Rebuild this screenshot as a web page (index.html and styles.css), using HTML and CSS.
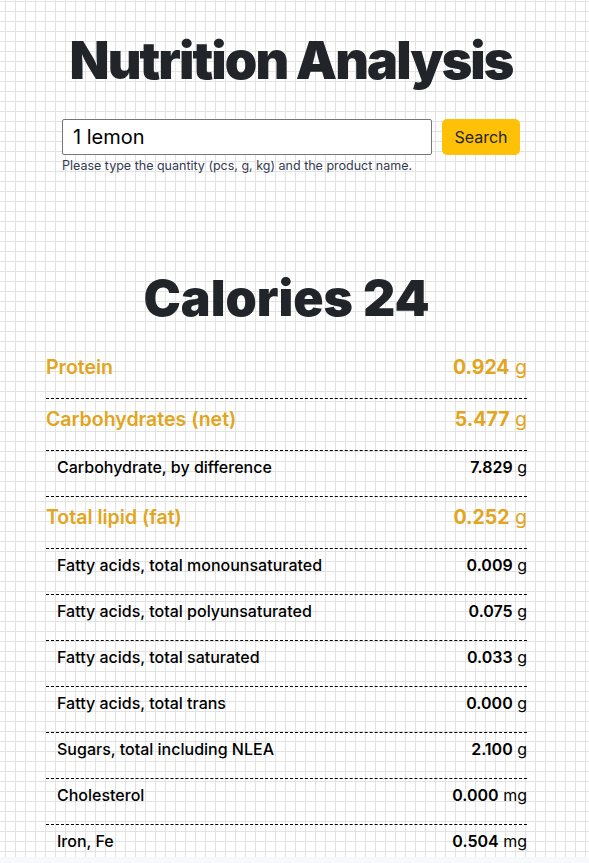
FILE: index.html
```html
<!DOCTYPE html>
<html lang="en">
<head>
<meta charset="utf-8">
<title>Nutrition Analysis</title>
<link rel="stylesheet" href="styles.css">
</head>
<body>
<main class="page">
  <header class="search-area">
    <h1 class="title">Nutrition Analysis</h1>
    <form class="search-form">
      <div class="search-row">
        <input class="search-input" type="text" value="1 lemon">
        <button class="search-btn" type="button">Search</button>
      </div>
      <p class="hint">Please type the quantity (pcs, g, kg) and the product name.</p>
    </form>
  </header>

  <section class="results">
    <h2 class="calories">Calories 24</h2>
    <div class="nutrients">
      <div class="row major"><span class="name">Protein</span><span class="val"><b>0.924</b> g</span></div>
      <div class="row major"><span class="name">Carbohydrates (net)</span><span class="val"><b>5.477</b> g</span></div>
      <div class="row minor"><span class="name">Carbohydrate, by difference</span><span class="val"><b>7.829</b> g</span></div>
      <div class="row major"><span class="name">Total lipid (fat)</span><span class="val"><b>0.252</b> g</span></div>
      <div class="row minor"><span class="name">Fatty acids, total monounsaturated</span><span class="val"><b>0.009</b> g</span></div>
      <div class="row minor"><span class="name">Fatty acids, total polyunsaturated</span><span class="val"><b>0.075</b> g</span></div>
      <div class="row minor"><span class="name">Fatty acids, total saturated</span><span class="val"><b>0.033</b> g</span></div>
      <div class="row minor"><span class="name">Fatty acids, total trans</span><span class="val"><b>0.000</b> g</span></div>
      <div class="row minor"><span class="name">Sugars, total including NLEA</span><span class="val"><b>2.100</b> g</span></div>
      <div class="row minor"><span class="name">Cholesterol</span><span class="val"><b>0.000</b> mg</span></div>
      <div class="row minor"><span class="name">Iron, Fe</span><span class="val"><b>0.504</b> mg</span></div>
    </div>
  </section>
</main>
</body>
</html>
```

FILE: styles.css
```css
html {
  background: #f7f8fc;
}

body {
  margin: 0;
  height: 857px;
  font-family: Inter, "Noto Sans", sans-serif;
  color: #212529;
  background-color: #ffffff;
  background-image:
    linear-gradient(to right, #e2e2e2 1px, transparent 1px),
    linear-gradient(to bottom, #e2e2e2 1px, transparent 1px);
  background-size: 10px 10px;
  background-position: 5px 1px;
}

.page {
  display: flex;
  flex-direction: column;
}

.search-area {
  padding: 30px 69px 0 62px;
}

.title {
  margin: 0 -40px 27px;
  font-size: 52px;
  line-height: 1.2;
  font-weight: 900;
  letter-spacing: -1.9px;
  white-space: nowrap;
  text-align: center;
  color: #212529;
}

.search-form {
  margin: 0;
}

.search-row {
  display: flex;
  gap: 10px;
}

.search-input {
  box-sizing: border-box;
  width: 370px;
  height: 36px;
  margin: 0;
  padding: 0 10px;
  border: 1px solid #767676;
  border-radius: 2px;
  background: #fff;
  font-family: inherit;
  font-size: 20px;
  color: #000;
}

.search-btn {
  box-sizing: border-box;
  width: 78px;
  height: 36px;
  border: 0;
  border-radius: 5px;
  background: #ffc107;
  color: #212529;
  font-family: inherit;
  font-size: 16px;
  padding: 0;
}

.hint {
  margin: 2px 0 0;
  font-size: 12.5px;
  line-height: 17px;
  color: #343a52;
}

.results {
  padding: 94px 62px 0 46px;
}

.calories {
  margin: 0 0 19px;
  font-size: 50px;
  line-height: 1.2;
  font-weight: 900;
  text-align: center;
  color: #212529;
}

.row {
  display: flex;
  justify-content: space-between;
  align-items: center;
  border-bottom: 1px dashed #000;
}

.major {
  padding: 6px 0 17px;
  font-size: 19.5px;
  line-height: 28px;
  font-weight: 600;
  color: #e2a51c;
}

.major .val b {
  font-weight: 700;
}

.minor {
  padding: 5px 0 18px 11px;
  font-size: 16px;
  line-height: 22px;
  font-weight: 500;
  color: #000;
}

.minor .val b {
  font-weight: 600;
}

.val {
  font-weight: 400;
}
```
